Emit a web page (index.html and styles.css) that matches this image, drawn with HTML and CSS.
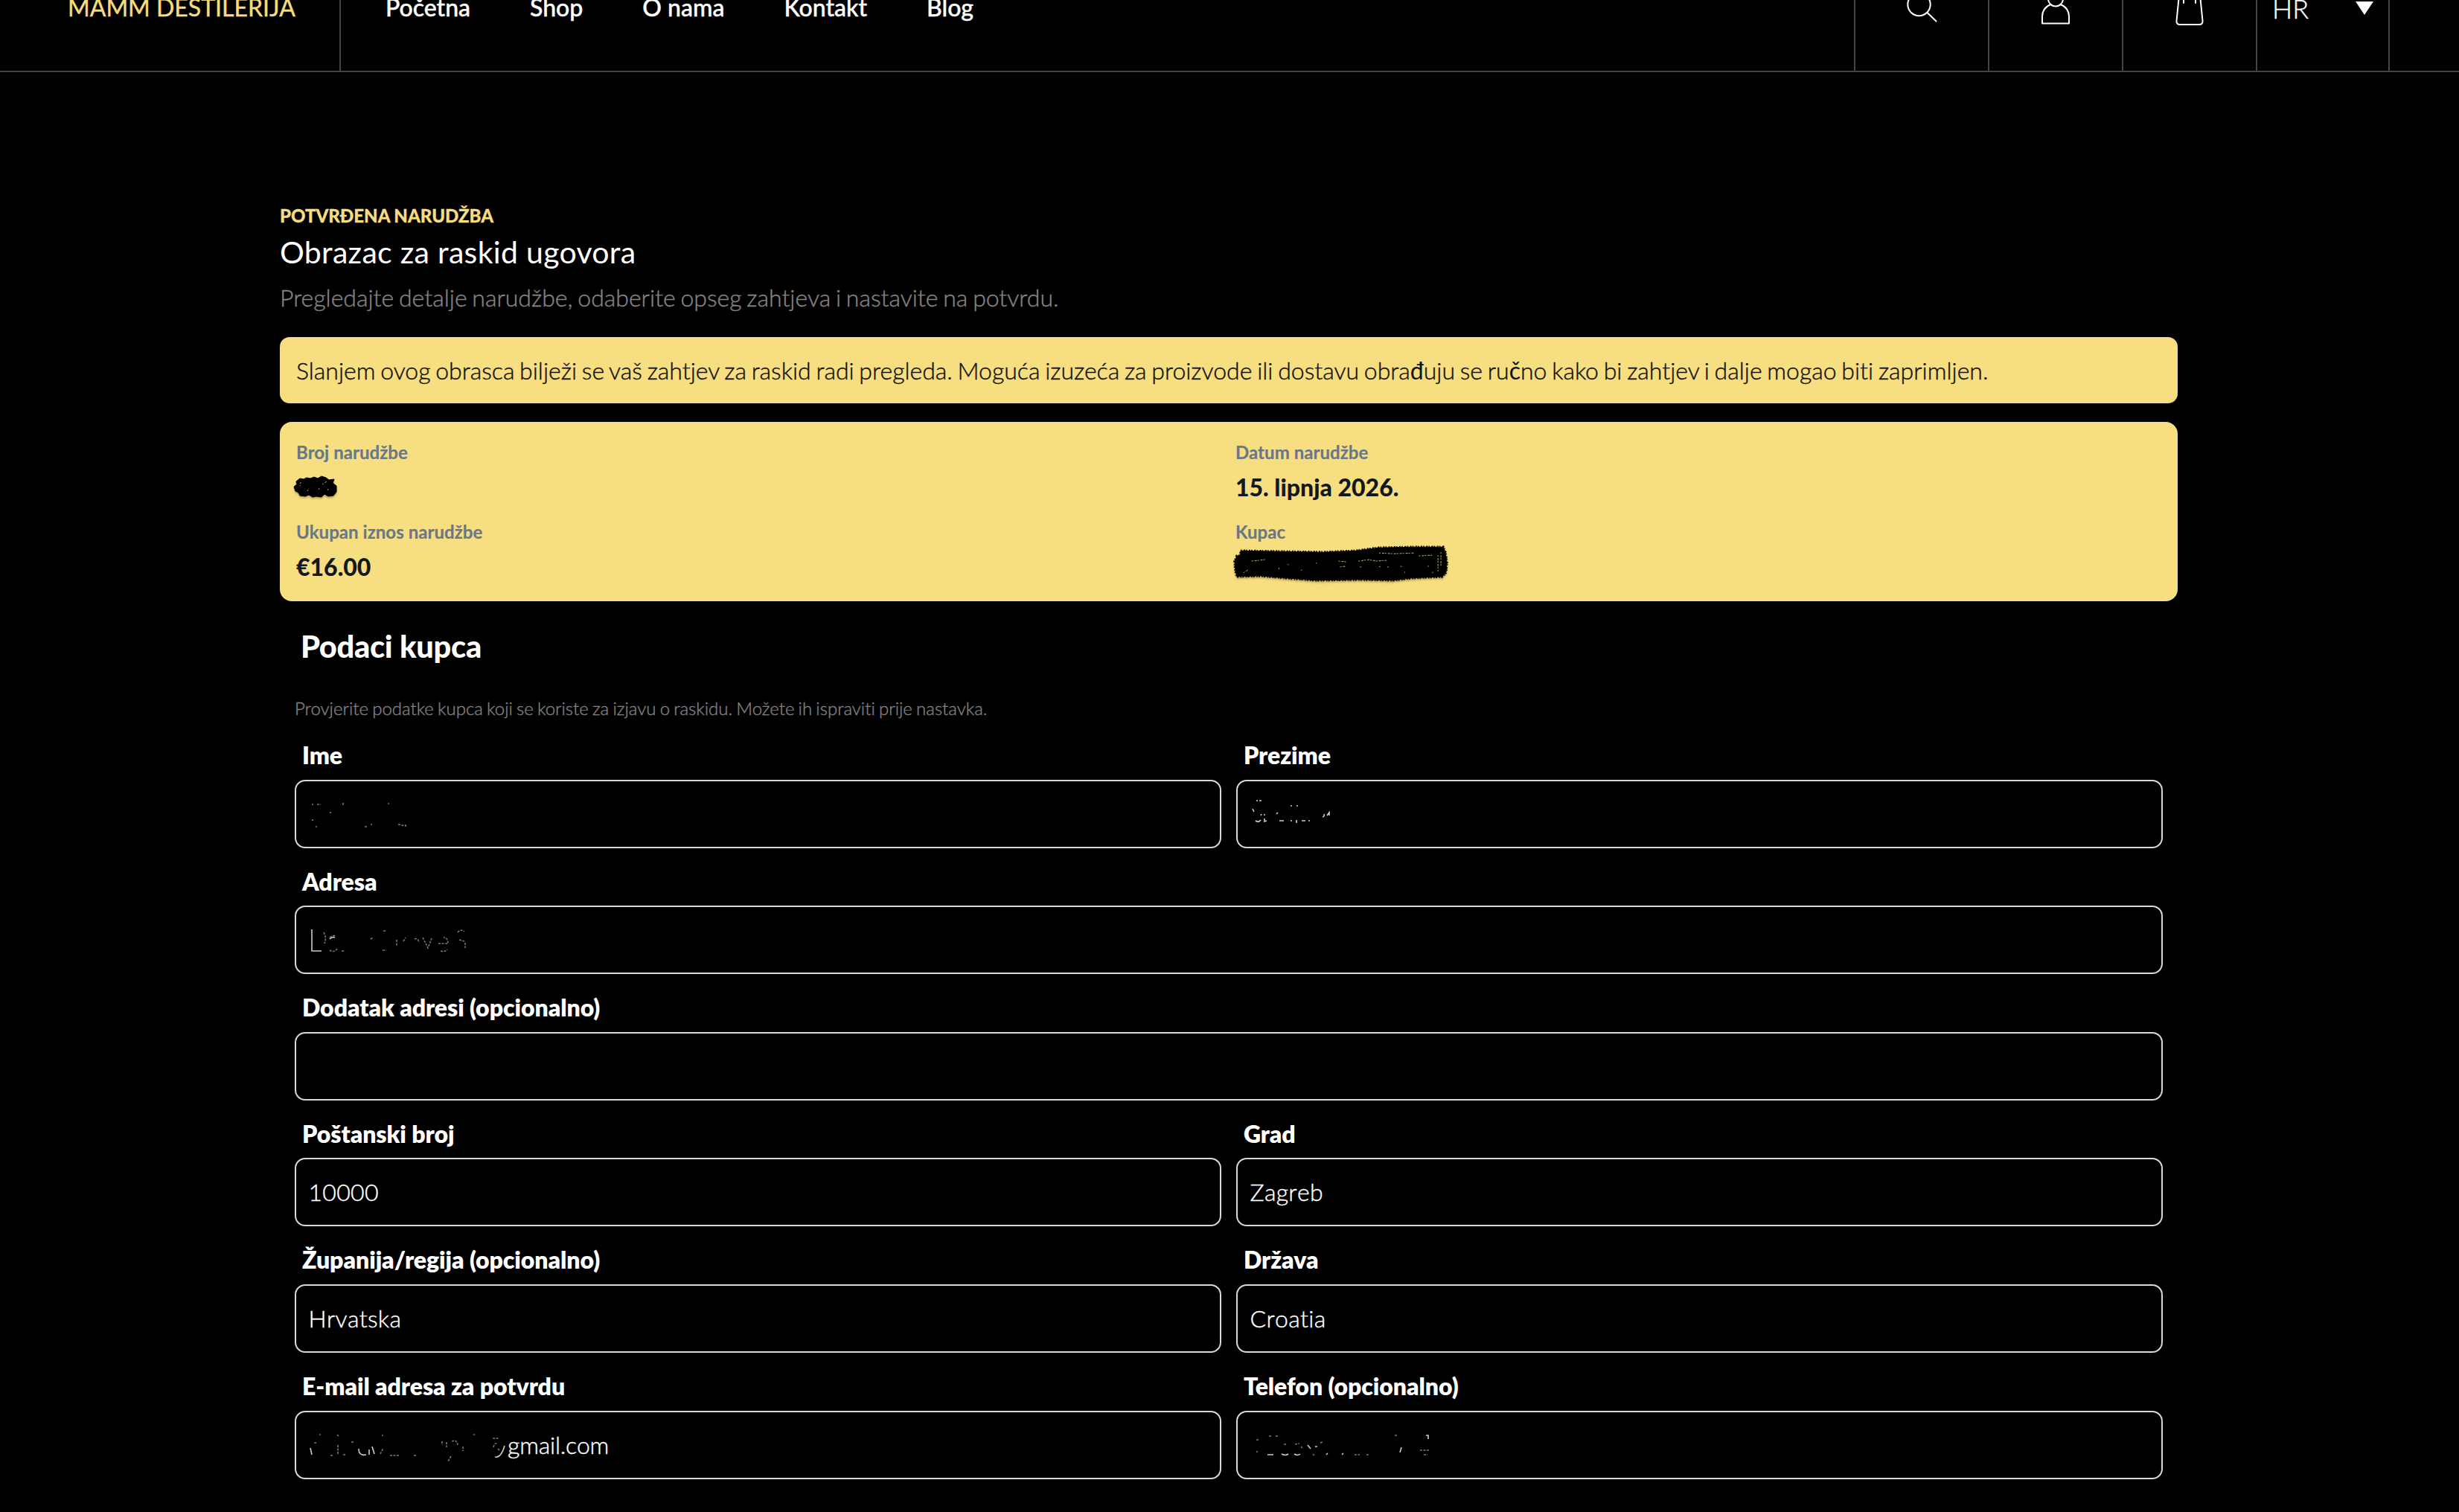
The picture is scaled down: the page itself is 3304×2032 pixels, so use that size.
FILE: index.html
```
<!DOCTYPE html>
<html lang="hr">
<head>
<meta charset="utf-8">
<title>Obrazac za raskid ugovora</title>
<link rel="stylesheet" href="styles.css">
</head>
<body>
<header class="header">
  <a class="logo">MAMM DESTILERIJA</a>
  <nav class="nav"><a>Početna</a><a>Shop</a><a>O nama</a><a>Kontakt</a><a>Blog</a></nav>
  <div class="tools">
    <div class="tool"><svg class="icon" viewBox="0 0 60 60"><circle cx="26.5" cy="26" r="15.2"/><path d="M37.5 37L49.500 48.500"/></svg></div>
    <div class="tool"><svg class="icon" viewBox="0 0 60 60"><circle cx="30" cy="18.500" r="10"/><path d="M23.500 26C16 28.500 12 35 12 42V51.500H48V42C48 35 44 28.500 36.500 26"/></svg></div>
    <div class="tool"><svg class="icon" viewBox="0 0 60 60"><path d="M16 13L12.500 48Q12.300 53 17 53H43Q47.700 53 47.500 48L44 13ZM22 24V13A8 8 0 0 1 38 13V24"/></svg></div>
    <div class="tool lang"><span>HR</span><svg class="caret" viewBox="0 0 24 18"><path d="M0 0H24L12 18Z"/></svg></div>
  </div>
</header>
<main class="page">
  <p class="eyebrow">POTVRĐENA NARUDŽBA</p>
  <h1 class="title">Obrazac za raskid ugovora</h1>
  <p class="lead">Pregledajte detalje narudžbe, odaberite opseg zahtjeva i nastavite na potvrdu.</p>
  <div class="notice">Slanjem ovog obrasca bilježi se vaš zahtjev za raskid radi pregleda. Moguća izuzeća za proizvode ili dostavu obra<b>đ</b>uju se ru<b>č</b>no kako bi zahtjev i dalje mogao biti zaprimljen.</div>
  <dl class="summary">
    <div><dt>Broj narudžbe</dt><dd>
      <svg class="scribble number" viewBox="0 0 60 32"><path class="ink" d="M3 7L8 3 13 4 17 2 22 3 27 1 32 3 37 0 43 2 47 5 54 4 52 9 57 13 57 21 53 26 46 27 41 24 37 28 30 27 25 28 20 25 15 27 8 26 6 22 2 20 0 14 4 11Z"/><path class="fleck" d="M9 8l-1 5M38 11l6-4M18 20l2-4M46 17l-1 4M33 18l1-2"/></svg></dd></div>
    <div><dt>Datum narudžbe</dt><dd>15. lipnja 2026.</dd></div>
    <div><dt>Ukupan iznos narudžbe</dt><dd>€16.00</dd></div>
    <div><dt>Kupac</dt><dd>
      <svg class="scribble name" viewBox="0 0 290 50"><path class="ink" d="M8 6L60 7 120 8 165 6 195 2 240 1 283 1 286 8 288 22 287 35 282 41 240 43 215 46 170 45 110 46 70 43 35 40 3 41 1 33 0 20 3 13 8 13Z"/><path class="rough" d="M8 6L60 7 120 8 165 6 195 2 240 1 283 1 286 8 288 22 287 35 282 41 240 43 215 46 170 45 110 46 70 43 35 40 3 41 1 33 0 20 3 13 8 13Z"/><path class="fleck" d="M12 36l6-4M23 20l18-2M141 20l10 1M168 20l14-2 10 2 14-1M196 9l20 1 28-1M143 28l8-1M170 28l4 0M196 28l2-1M207 28l3 0M225 27l4 1M262 26l2 3M268 36l3-2M250 13l18-1M276 12v22M280 8v18M60 29v2M90 33l2-2M110 22l2 2M72 24l2 2M230 36l2-2"/></svg></dd></div>
  </dl>
  <section class="form">
    <h2 class="legend">Podaci kupca</h2>
    <p class="hint">Provjerite podatke kupca koji se koriste za izjavu o raskidu. Možete ih ispraviti prije nastavka.</p>
    <div class="fields">
      <div class="field"><label>Ime</label><div class="input"><svg class="residue" viewBox="0 0 268 44"><path class="dim" d="M5 8v2M11 9h5M46 7v4M29 19v2M5 29v2M9 39h2M75 39h3M83 36h2M120 36l10 2M106 8h2M130 36v3"/></svg></div></div>
      <div class="field"><label>Prezime</label><div class="input"><svg class="residue" viewBox="0 0 268 44"><path d="M8 4h2M12 4h3M3 15l2 4M7 31q4 3 7-1M19 28v4l3-1M14 24l1-2M19 24v-2M35 22l2-2M39 31h6M55 30v2M62 30v4M69 31h5M78 31h2M54 11h2M62 11h2M97 26q3-1 2-4M103 24l3-4v4"/></svg></div></div>
      <div class="field wide"><label>Adresa</label><div class="input"><svg class="residue" viewBox="0 0 268 44"><path d="M4 8v29h13M28 21q4-4 7-2"/><path class="dim" d="M20 12q4 7 1 15M28 19q6-4 8-2M28 36q6 4 10-2M44 37h3M83 21l3-2M100 10h3M99 36h5M118 22v8M127 24l3-5M142 21q5-2 6 5M153 19l7 14 5-13M174 27h13q-1-9-6-8M177 37q5 2 9-2M200 12q4-5 9-1M202 22l7 2M210 26v7"/></svg></div></div>
      <div class="field wide"><label>Dodatak adresi (opcionalno)</label><div class="input"></div></div>
      <div class="field"><label>Poštanski broj</label><div class="input">10000</div></div>
      <div class="field"><label>Grad</label><div class="input">Zagreb</div></div>
      <div class="field"><label>Županija/regija (opcionalno)</label><div class="input">Hrvatska</div></div>
      <div class="field"><label>Država</label><div class="input">Croatia</div></div>
      <div class="field"><label>E-mail adresa za potvrdu</label><div class="input email"><svg class="residue" viewBox="0 0 268 44"><path d="M3 26l2 9M68 27q0 10 10 8M82 28v7M86 24l3 10M251 38q8 2 13-15"/><path class="dim" d="M8 19h4M15 8h2M39 8l2 2M40 22v12M30 36h3M47 35h3M58 18h3M97 34l4-8M99 9h2M110 36h12M142 36h3M180 17v5M186 18v7M193 17q7-3 8 5M192 37l-4 7M208 24v6M222 8h2M248 13h8M249 25q2-7 6-5M255 27l3 3"/></svg>gmail.com</div></div>
      <div class="field"><label>Telefon (opcionalno)</label><div class="input"><svg class="residue" viewBox="0 0 268 44"><path d="M23 35h8M42 34q5 3 9 0M59 34q5 3 8 0M77 22l4 5M87 24h3M102 35l2-2M201 32l2-7M236 9h3v5M123 35l2-2"/><path class="dim" d="M8 15h3M9 30v2M25 10h4M34 10h3M45 21h4M60 21l6-1M68 24l2 2M84 34l2 2M94 19l3-1M140 35h7M156 35h3M194 9h4M228 29h12M233 35h5"/></svg></div></div>
    </div>
  </section>
</main>
</body>
</html>
```
FILE: styles.css
```
* { box-sizing: border-box; margin: 0; padding: 0; }
html, body { height: 2032px; overflow: hidden; }
body { background: #010001; color: #fff; font: 300 32px/40px Lato, "Noto Sans", sans-serif; font-variant-ligatures: none; }

.header { display: flex; align-items: stretch; height: 173px; margin-top: -76px; border-bottom: 2px solid #434343; font-weight: 500; }
.logo { display: flex; align-items: center; width: 458px; padding-left: 91px; border-right: 2px solid #434343; color: #f6dd7e; font-weight: 400; white-space: nowrap; -webkit-text-stroke: .4px; }
.nav { display: flex; align-items: center; gap: 80px; padding: 1px 0 0 60px; -webkit-text-stroke: .4px; }
.tools { display: flex; margin-left: auto; margin-right: 93px; border-right: 2px solid #434343; }
.tool { display: flex; align-items: center; justify-content: center; width: 180px; border-left: 2px solid #434343; }
.icon { width: 60px; height: 60px; fill: none; stroke: #fff; stroke-width: 2; stroke-linecap: round; stroke-linejoin: round; }
.lang { justify-content: space-between; width: 178px; padding: 3px 20px 0 20px; font-size: 36px; font-weight: 300; -webkit-text-stroke: .4px; }
.caret { width: 24px; height: 18px; fill: #fff; }

.page { width: 2550px; margin: 178px 0 0 376px; }
.eyebrow { font-size: 24px; font-weight: 900; line-height: 29px; color: #f6dd7e; -webkit-text-stroke: .3px; }
.title { margin-top: 10px; font-size: 41px; font-weight: 400; line-height: 50px; letter-spacing: .3px; }
.lead { margin-top: 12px; line-height: 48px; word-spacing: -1.900px; color: #858585; -webkit-text-stroke: .4px; }
.notice { height: 89px; margin-top: 29px; padding: 25px 22px; border-radius: 13px; background: #f7de80; color: #111; word-spacing: -1.950px; white-space: nowrap; -webkit-text-stroke: .4px; }
.notice b { font-weight: 400; -webkit-text-stroke: 0; }
.summary { display: grid; grid-template-columns: 1fr 1fr; gap: 24px 18px; height: 241px; margin-top: 25px; padding: 26px 22px; border-radius: 16px; background: #f7de80; }
.summary dt { height: 30px; font-size: 24px; font-weight: 700; line-height: 30px; letter-spacing: .05px; color: #697889; -webkit-text-stroke: .2px; }
.summary dd { position: relative; height: 40px; margin-top: 12px; font-weight: 900; color: #111820; }
.scribble { position: absolute; overflow: visible; fill: none; filter: drop-shadow(0 2px 1px rgba(70, 50, 0, .35)); }
.ink { fill: #000; stroke: #000; stroke-width: 1; }
.rough { stroke: #000; stroke-width: 3.500; stroke-dasharray: 1.5 2.500 2 1.300; }
.fleck { stroke: #c4b165; stroke-width: 1; stroke-dasharray: 2 2 3 1; }
.number { left: -3px; top: 5px; width: 60px; height: 32px; }
.name { left: -1px; top: -8px; width: 287px; height: 50px; }

.form { padding: 35px 20px 0; }
.legend { padding-left: 8px; font-size: 41.6px; font-weight: 900; line-height: 50px; letter-spacing: -.3px; }
.hint { margin-top: 44px; font-size: 24px; line-height: 30px; word-spacing: -1.300px; color: #858585; -webkit-text-stroke: .35px; }
.fields { display: grid; grid-template-columns: 1fr 1fr; gap: 24px 20px; margin-top: 27px; }
.wide { grid-column: span 2; }
.field { padding-top: 1px; }
.field label { display: block; padding-left: 10px; font-weight: 800; letter-spacing: -.05px; }
.input { display: flex; align-items: center; height: 92px; margin-top: 12.600px; padding: 0 16.500px; border: 2px solid #d8d8dd; border-radius: 14px; background: #000001; letter-spacing: .3px; font-kerning: none; -webkit-text-stroke: .4px; }
.email { padding-left: 16px; letter-spacing: -.2px; }
.residue { flex: none; width: 268px; height: 44px; fill: none; stroke: #ccc; stroke-width: 1.600; }
.dim { stroke: #777; stroke-dasharray: 3 1.500; }
```
